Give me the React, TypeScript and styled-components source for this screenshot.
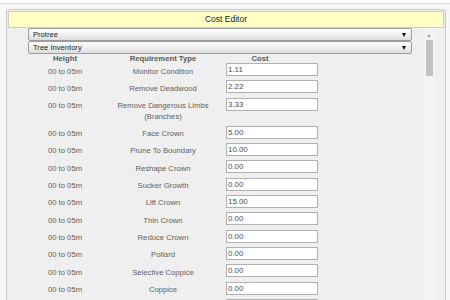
import React from "react";
import styled, { createGlobalStyle } from "styled-components";

const GlobalStyle = createGlobalStyle`
  html, body {
    margin: 0;
    padding: 0;
    background: #ffffff;
    overflow: hidden;
  }
  body {
    font-family: "Liberation Sans", Arial, sans-serif;
  }
`;

const Frame = styled.div`
  margin-top: 3px;
  border-top: 1px solid #dadada;
  background: #f7f7f7;
  padding: 5px 4px 0 6px;
  height: 297px;
  box-sizing: border-box;
`;

const Panel = styled.div`
  height: 100%;
  box-sizing: border-box;
  border: 1px solid #c9c9c9;
  border-bottom: none;
  border-radius: 3px 3px 0 0;
  background: #efefef;
  padding: 1px 1px 0 1px;
  display: flex;
  flex-direction: column;
`;

const TitleBar = styled.div`
  height: 17px;
  box-sizing: border-box;
  border: 1px solid #cfcfc0;
  background: #ffffc4;
  color: #1a1a1a;
  font-size: 8.5px;
  line-height: 15px;
  text-align: center;
`;

const Body = styled.div`
  flex: 1;
  display: flex;
  min-height: 0;
`;

const ScrollContent = styled.div`
  width: 415px;
  padding: 0 11px 0 20px;
  box-sizing: border-box;
  overflow: hidden;
`;

const Rail = styled.div`
  width: 12px;
  background: #f3f3f3;
  display: flex;
  flex-direction: column;
  align-items: center;
`;

const UpArrow = styled.div`
  margin-top: 6px;
  width: 0;
  height: 0;
  border-left: 2.5px solid transparent;
  border-right: 2.5px solid transparent;
  border-bottom: 3px solid #a3a3a3;
`;

const Thumb = styled.div`
  margin-top: 3px;
  width: 7px;
  height: 36px;
  background: #c2c2c2;
`;

const SelectBox = styled.div`
  height: 13px;
  box-sizing: border-box;
  border: 1px solid #9c9c9c;
  border-radius: 2px;
  background: linear-gradient(#fefefe, #dedede);
  display: flex;
  align-items: center;
  justify-content: space-between;
  padding: 0 5px 0 4px;
  font-size: 7.6px;
  color: #1e1e1e;
`;

const Caret = styled.span`
  width: 0;
  height: 0;
  border-left: 2.5px solid transparent;
  border-right: 2.5px solid transparent;
  border-top: 4.5px solid #111;
`;

const columns = "74px 122px 1fr";

const HeadRow = styled.div`
  display: grid;
  grid-template-columns: ${columns};
  height: 9px;
  line-height: 9px;
  font-size: 7.7px;
  font-weight: bold;
  color: #5a5a5a;
`;

const HeadCell = styled.div<{ $width?: number }>`
  text-align: center;
  width: ${(p) => (p.$width ? `${p.$width}px` : "auto")};
`;

const Grid = styled.div`
  display: grid;
  grid-template-columns: ${columns};
  row-gap: 3.35px;
  align-items: start;
`;

const Cell = styled.div`
  padding-top: 3.5px;
  line-height: 10.5px;
  font-size: 7.7px;
  color: #626262;
  text-align: center;
`;

const CostInput = styled.input`
  display: block;
  margin: 0 0 0 2px;
  width: 92px;
  height: 13px;
  box-sizing: border-box;
  border: 1px solid #b1b1b1;
  background: #ffffff;
  padding: 0 1px;
  font-family: "Liberation Sans", Arial, sans-serif;
  font-size: 7.9px;
  color: #4b4f5e;
  outline: none;
`;

const rows: [string, string][] = [
  ["Monitor Condition", "1.11"],
  ["Remove Deadwood", "2.22"],
  ["Remove Dangerous Limbs (Branches)", "3.33"],
  ["Face Crown", "5.00"],
  ["Prune To Boundary", "10.00"],
  ["Reshape Crown", "0.00"],
  ["Sucker Growth", "0.00"],
  ["Lift Crown", "15.00"],
  ["Thin Crown", "0.00"],
  ["Reduce Crown", "0.00"],
  ["Pollard", "0.00"],
  ["Selective Coppice", "0.00"],
  ["Coppice", "0.00"],
  ["Fell", "0.00"],
];

export default function App() {
  return (
    <>
      <GlobalStyle />
      <Frame>
        <Panel>
          <TitleBar>Cost Editor</TitleBar>
          <Body>
            <ScrollContent>
              <SelectBox>
                <span>Protree</span>
                <Caret />
              </SelectBox>
              <SelectBox>
                <span>Tree Inventory</span>
                <Caret />
              </SelectBox>
              <HeadRow>
                <HeadCell>Height</HeadCell>
                <HeadCell>Requirement Type</HeadCell>
                <HeadCell $width={72}>Cost</HeadCell>
              </HeadRow>
              <Grid>
                {rows.map(([name, cost]) => (
                  <React.Fragment key={name}>
                    <Cell>00 to 05m</Cell>
                    <Cell>{name}</Cell>
                    <CostInput defaultValue={cost} />
                  </React.Fragment>
                ))}
              </Grid>
            </ScrollContent>
            <Rail>
              <UpArrow />
              <Thumb />
            </Rail>
          </Body>
        </Panel>
      </Frame>
    </>
  );
}
